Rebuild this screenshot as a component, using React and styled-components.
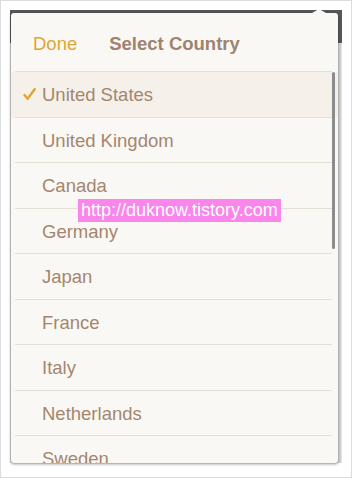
import React, { useState } from 'react'
import styled, { createGlobalStyle } from 'styled-components'

const countries = [
  'United States',
  'United Kingdom',
  'Canada',
  'Germany',
  'Japan',
  'France',
  'Italy',
  'Netherlands',
  'Sweden',
  'Spain',
]

const App = () => {
  const [selected, setSelected] = useState('United States')
  return (
    <>
      <GlobalStyle />
      <Frame>
        <Screen>
          <AppBar />
          <ScreenBody />
          <Popover>
            <Arrow />
            <Header>
              <DoneButton>Done</DoneButton>
              <Title>Select Country</Title>
            </Header>
            <List>
              {countries.map((name) => (
                <Row
                  key={name}
                  active={name === selected}
                  onClick={() => setSelected(name)}
                >
                  <CheckSlot>
                    {name === selected && (
                      <svg viewBox="0 0 14 14" width="13" height="13">
                        <path d="M1.6 7.6 L5 11.6 L12.6 1.4" />
                      </svg>
                    )}
                  </CheckSlot>
                  {name}
                </Row>
              ))}
              <Scrollbar />
            </List>
            <Watermark>http://duknow.tistory.com</Watermark>
          </Popover>
        </Screen>
      </Frame>
    </>
  )
}

export default App

const GlobalStyle = createGlobalStyle`
  html, body {
    margin: 0;
    padding: 0;
    background: #fff;
  }
  * {
    box-sizing: border-box;
  }
`

const Frame = styled.div`
  width: 352px;
  height: 478px;
  border: 1px solid #dcdcdc;
  padding: 9px;
  background: #fff;
  font-family: "Liberation Sans", Arial, sans-serif;
`

const Screen = styled.div`
  position: relative;
  width: 332px;
  height: 453px;
  display: flex;
  flex-direction: column;
`

const AppBar = styled.div`
  height: 33px;
  background: #575757;
`

const ScreenBody = styled.div`
  flex: 1;
  background: #d3d3d3;
  border-right: 1px solid #e4e4e4;
`

const Popover = styled.div`
  position: absolute;
  left: 1px;
  top: 3px;
  width: 327px;
  height: 450px;
  background: #faf8f4;
  border-radius: 3px;
  box-shadow: 0 1px 3px rgba(0, 0, 0, 0.45);
  display: flex;
  flex-direction: column;
`

const Arrow = styled.div`
  position: absolute;
  top: -4px;
  left: 301px;
  width: 0;
  height: 0;
  border-left: 7px solid transparent;
  border-right: 7px solid transparent;
  border-bottom: 4px solid #faf8f4;
`

const Header = styled.div`
  flex: none;
  height: 59px;
  margin: 0 6px 0 4px;
  padding: 3px 0 0 18px;
  display: flex;
  align-items: center;
  gap: 32px;
  border-bottom: 1px solid #e5dfd6;
  font-size: 18.5px;
`

const DoneButton = styled.span`
  color: #dea537;
  cursor: pointer;
`

const Title = styled.span`
  color: #a0836e;
  font-weight: bold;
`

const List = styled.div`
  position: relative;
  flex: 1;
  overflow: hidden;
  border-radius: 0 0 3px 3px;
`

const Row = styled.div`
  position: relative;
  height: 45.5px;
  padding: 1px 0 0 12px;
  display: flex;
  align-items: center;
  font-size: 18.5px;
  color: #a4866f;
  background: ${({ active }) => (active ? '#f5f1ea' : 'transparent')};
  cursor: pointer;

  &::after {
    content: '';
    position: absolute;
    left: 4px;
    right: 6px;
    bottom: 0;
    height: 1px;
    background: #e5dfd6;
  }
`

const CheckSlot = styled.span`
  flex: none;
  width: 19px;
  height: 13px;
  display: flex;
  margin-top: -2px;

  svg {
    fill: none;
    stroke: #e0a532;
    stroke-width: 2.6;
    stroke-linecap: round;
    stroke-linejoin: round;
  }
`

const Scrollbar = styled.div`
  position: absolute;
  right: 3px;
  top: 0;
  width: 3px;
  height: 177px;
  border-radius: 2px;
  background: #8c8c8c;
`

const Watermark = styled.div`
  position: absolute;
  left: 67px;
  top: 186px;
  height: 23px;
  padding: 0 3px;
  display: flex;
  align-items: center;
  background: #fa86ec;
  color: #fff;
  font-size: 18px;
  white-space: nowrap;
`
